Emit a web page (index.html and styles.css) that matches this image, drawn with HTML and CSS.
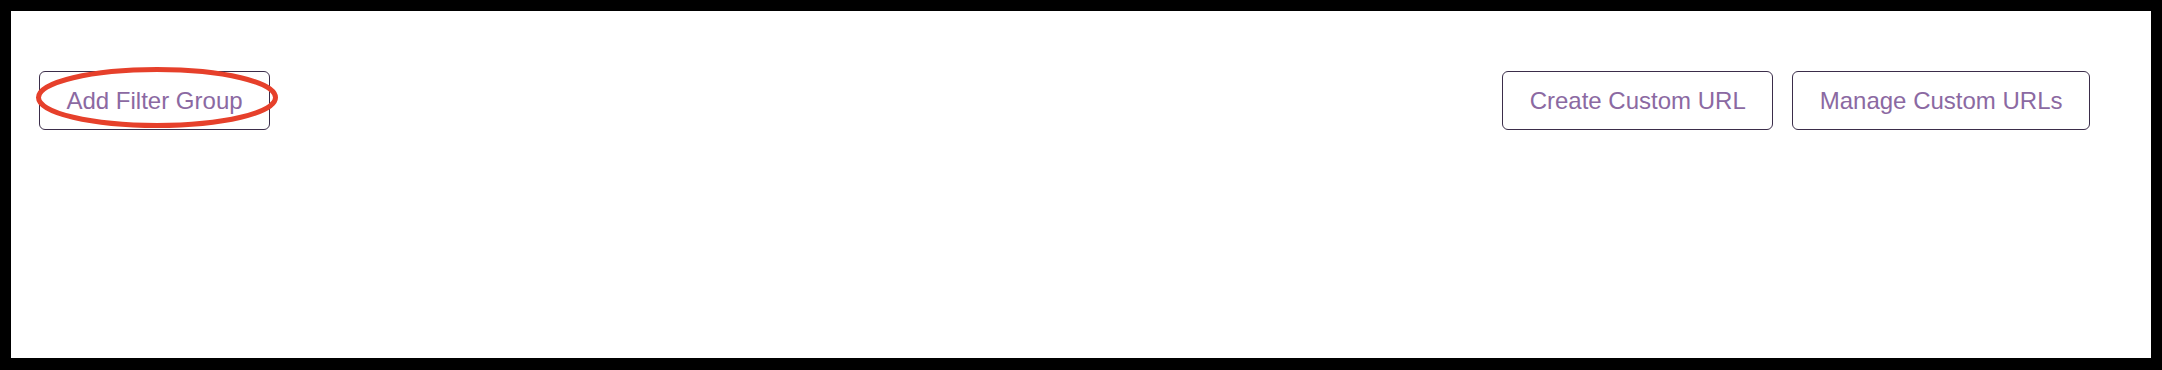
FILE: index.html
```html
<!DOCTYPE html>
<html lang="en">
<head>
  <meta charset="UTF-8" />
  <title>Filters</title>
  <link rel="stylesheet" href="styles.css">
</head>
<body>

  <div class="frame">
    <div class="toolbar">
      <div class="marked">
        <button class="btn">Add Filter Group</button>
        <!-- annotation ring -->
        <svg class="ring" width="244" height="63" viewBox="0 0 244 63">
          <ellipse cx="122" cy="31.5" rx="118.5" ry="28" fill="none" stroke="#e6402b" stroke-width="5" />
        </svg>
      </div>
      <div class="actions">
        <button class="btn">Create Custom URL</button>
        <button class="btn">Manage Custom URLs</button>
      </div>
    </div>
  </div>

</body>
</html>
```

FILE: styles.css
```css
html, body {
  margin: 0;
  background: #fff;
}

.frame {
  box-sizing: border-box;
  height: 370px;
  border: 11px solid #000;
  border-bottom-width: 12px;
  padding: 60px 61px 0 28px;
  font-family: "Liberation Sans", Arial, sans-serif;
}

.toolbar {
  display: flex;
  justify-content: space-between;
  align-items: flex-start;
}

.actions {
  display: flex;
  gap: 19px;
}

.marked {
  position: relative;
}

.ring {
  position: absolute;
  left: -4px;
  top: -5px;
  pointer-events: none;
}

.btn {
  box-sizing: border-box;
  height: 59px;
  padding: 0 26.5px;
  border: 1px solid #3b2d4a;
  border-radius: 6px;
  background: #fff;
  color: #8b69a2;
  font-family: "Liberation Sans", Arial, sans-serif;
  font-size: 24px;
  cursor: pointer;
}
```
